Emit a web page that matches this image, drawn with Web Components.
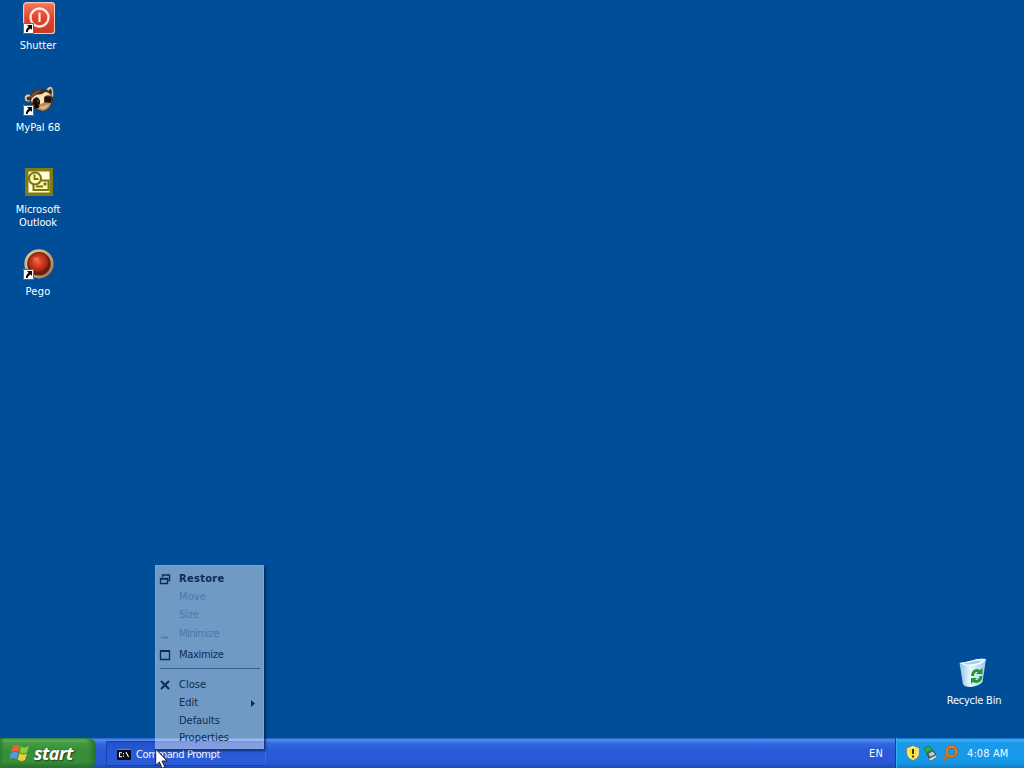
<!DOCTYPE html>
<html lang="en"><head><meta charset="utf-8"><title>Desktop</title>
<style>html,body{margin:0;width:1024px;height:768px;overflow:hidden;background:#004e98}</style></head>
<body><xp-desktop></xp-desktop>
<script>
const define=(name,html,after)=>{
  const t=document.createElement('template');t.innerHTML=html;
  customElements.define(name,class extends HTMLElement{
    constructor(){super();this.attachShadow({mode:'open'}).append(t.content.cloneNode(true));}
    connectedCallback(){if(after)after(this,this.shadowRoot);}
  });
};

// Text run whose tracking is adjusted to the advance width in the "w" attribute.
define('ui-text','<style>:host{display:block;white-space:nowrap}span{display:inline-block;white-space:nowrap}</style><span></span>',(el,r)=>{
  const s=r.querySelector('span');s.textContent=el.getAttribute('text');
  const w=+el.getAttribute('w');
  if(w){const n=s.textContent.length;s.style.letterSpacing=((w-s.getBoundingClientRect().width)/n)+'px';}
});

const arrow='<svg x="0" y="21" width="11" height="11" viewBox="0 0 11 11"><path fill="#fff" d="M0 0h11v11H0z"/><path d="M.5.5h10v10H.5z" fill="none" stroke="#222" stroke-width=".7"/><path d="M4 2h5v5L7.600 5.600C5.800 6.500 5 7.500 4.700 9L3 9C2.800 6.700 4 5 5.600 3.800z" fill="#000"/></svg>';
const icons={
shutter:`<defs><linearGradient id="g" x2="0" y2="1"><stop stop-color="#ef7b62"/><stop offset=".5" stop-color="#e0432c"/><stop offset="1" stop-color="#c93a25"/></linearGradient></defs><rect x=".6" y=".6" width="31" height="31" rx="3" fill="url(#g)" stroke="#f6c5b4" stroke-width="1.200"/><circle cx="16.500" cy="15.500" r="9" fill="none" stroke="#ffeadd" stroke-width="2.300"/><path d="M16.500 10.500v9.500" stroke="#ffeadd" stroke-width="2.200"/>${arrow}`,
mypal:`<ellipse cx="5.500" cy="14" rx="3.800" ry="3.600" fill="#e3cda6"/><ellipse cx="5.500" cy="14.500" rx="2" ry="2" fill="#4b3526"/><path d="M23 6Q26 2 28.500 3Q31 6 30 13L26 12z" fill="#dfc8a0"/><path d="M25 7l3-2.500q1.500 3 .5 6z" fill="#3a2a20"/><path d="M6 14Q8 5 17 5Q25 4 28 10Q31 16 29 21Q25 27 18 27Q10 25 8 21z" fill="#4a3020"/><path d="M7 13Q11 6 18 5.500L15 9Q11 10 8 15z" fill="#725038"/><path d="M8 16Q11 10 17 10.500Q20 10 22 8Q26 8 28 12Q24 10 21 13L21 19L17 21Q18 15 14 13Q10 13 9 19z" fill="#f7e3bb"/><path d="M10 16Q14 12 17 17Q17 20 14 22L10 20zM22 14Q26 11 28.500 15L27 19L22 18z" fill="#1b110c"/><path d="M13 22L18 20L22 18.500L28 19Q27 25 20 27L14 25z" fill="#bd895a"/><path d="M15 23Q20 23 26 20Q24 25 19 25z" fill="#e2b983"/><ellipse cx="13.700" cy="22.500" rx="2.600" ry="2" fill="#0b0908"/><circle cx="15" cy="17" r=".8" fill="#b9854f"/>${arrow}`,
outlook:`<rect x="2" y="2" width="28" height="28" fill="#7e7c13"/><path d="M5.500 5.500h21v21h-21z" fill="#fffed8"/><path d="M13.500 14.500h12v9.500h-15v-5" fill="#fff9b9" stroke="#77750f" stroke-width="2"/><circle cx="12" cy="12.500" r="6" fill="#fff9b9" stroke="#77750f" stroke-width="2"/><path d="M11.500 8.500v4.500h4M13 20.500h7" fill="none" stroke="#77750f" stroke-width="1.800"/><path d="M20.500 16.500h3v3h-3z" fill="#77750f"/>`,
pego:`<defs><radialGradient id="p" cx=".45" cy=".4"><stop stop-color="#ee6540"/><stop offset=".5" stop-color="#d0391d"/><stop offset=".85" stop-color="#a52a14"/><stop offset="1" stop-color="#6a1d12"/></radialGradient><linearGradient id="q" x2="1" y2="1"><stop stop-color="#ecd295"/><stop offset=".6" stop-color="#c79a66"/><stop offset="1" stop-color="#9b7048"/></linearGradient></defs><circle cx="16" cy="15.800" r="14.600" fill="url(#q)"/><circle cx="16" cy="15.800" r="11.800" fill="#602819"/><circle cx="16" cy="15.800" r="10.800" fill="url(#p)"/><ellipse cx="13" cy="11" rx="3" ry="2" fill="#f99b75" opacity=".4"/>${arrow}`,
bin:`<defs><linearGradient id="b"><stop stop-color="#8fc0e6"/><stop offset=".4" stop-color="#e5f8fc"/><stop offset="1" stop-color="#9fcbed"/></linearGradient></defs><path d="M1.500 6Q8 5 14 3.500Q20 1 28 2L24.500 25Q21 29 13 30Q6 30 5 27z" fill="url(#b)"/><path d="M1.500 6Q8 5 14 3.500Q20 1 28 2Q25 7 17 8.500Q8 10 1.500 6z" fill="#f0fbff"/><path d="M5 6.500Q11 6 15 4.500Q20 3 25 3.500Q21 6.500 15 7Q9 8 5 6.500z" fill="#a0cbea"/><g fill="none" stroke="#249431" stroke-width="2.800"><path d="M14.500 19c0-5 4.500-7 7.500-4M23 19c0 5-5 7-8 4"/></g><path d="M18 17h6.500v-6zM19 21h-6v6z" fill="#249431"/>`
};

define('desktop-icon',`<style>:host{display:flex;flex-direction:column;align-items:center;width:76px;height:82px;color:#fff;font:11px/13px "DejaVu Sans Condensed","DejaVu Sans",sans-serif;font-stretch:condensed}svg{display:block;flex:none}.art{width:32px;height:32px;margin:0 0 5px 1px}:host([icon=bin]) .art{margin-left:0}</style><svg class="art" width="32" height="32" viewBox="0 0 32 32"></svg><slot></slot>`,(el,r)=>{r.querySelector('svg').innerHTML=icons[el.getAttribute('icon')];});

define('menu-item',`<style>:host{display:flex;align-items:center;box-sizing:border-box;height:18px;color:#0d2c51}:host([off]){color:#4c78ab}:host([bold]){font-weight:bold}.i{width:23px;height:12px;flex:none}.i svg{display:block;margin-left:3px}.a{margin-left:auto;margin-right:8px;width:4px;height:7px;display:none}:host([sub]) .a{display:block}</style><span class="i"><svg width="12" height="12" viewBox="0 0 12 12" fill="none" stroke="currentColor"></svg></span><slot></slot><svg class="a" viewBox="0 0 4 7"><path d="M0 0l4 3.500-4 3.500z" fill="currentColor"/></svg>`,(el,r)=>{
 r.querySelector('svg').innerHTML=({
 restore:'<path d="M3.500 4V2h7v5.500H9M3 2h8" stroke-width="1.400"/><path d="M1.500 5.500h7v5h-7zM1 6h8" stroke-width="1.300"/>',
 min:'<path d="M2 9.500h7" stroke-width="1.500"/>',
 max:'<path d="M1.500 2h9v8.500h-9z" stroke-width="1.300"/><path d="M1 2h10" stroke-width="2"/>',
 close:'<path d="M2 2l8 8M10 2l-8 8" stroke-width="2"/>'})[el.getAttribute('icon')]||'';
});

define('context-menu',`<style>:host{display:block;position:absolute;left:155px;top:565px;width:109px;height:184px;box-sizing:border-box;background:rgba(255,255,255,.43);border:1px solid rgba(150,180,208,.45);box-shadow:2px 2px 2px rgba(0,20,60,.55);font:11px/14px "DejaVu Sans Condensed","DejaVu Sans",sans-serif;font-stretch:condensed;padding-top:4px}
hr{height:1px;border:0;background:#345f91;margin:2px 3px 7px 4px}</style>
<menu-item bold icon="restore"><ui-text text="Restore" w="45.500"></ui-text></menu-item>
<menu-item off><ui-text text="Move" w="27"></ui-text></menu-item>
<menu-item off><ui-text text="Size" w="20"></ui-text></menu-item>
<menu-item off icon="min" style="height:20px"><ui-text text="Minimize" w="40"></ui-text></menu-item>
<menu-item icon="max" style="height:22px"><ui-text text="Maximize" w="44.500"></ui-text></menu-item><hr>
<menu-item icon="close"><ui-text text="Close" w="27"></ui-text></menu-item>
<menu-item sub><ui-text text="Edit" w="19"></ui-text></menu-item>
<menu-item style="height:17px"><ui-text text="Defaults" w="41"></ui-text></menu-item>
<menu-item style="height:17px"><ui-text text="Properties" w="50"></ui-text></menu-item>`);

define('start-button',`<style>:host{display:flex;align-items:center;box-sizing:border-box;width:96px;height:30px;padding-left:10px;gap:4px;border-radius:0 8px 8px 0;background:linear-gradient(#529f53 0,#70ba6d 2px,#439d43 5px,#388e38 12px,#388f38 24px,#286f2b);box-shadow:inset -4px 0 5px #287132,inset 2px 0 3px #2a8138;color:#fff;font:italic bold 18px/22px "Open Sans","Liberation Sans",sans-serif;text-shadow:1px 1px 2px #173e1a}ui-text{margin-top:-1px}svg{flex:none;margin-top:-1px}</style>
<svg width="20" height="20" viewBox="0 0 20 20"><path d="M3 3q4-2 7 0L8.500 9Q5 7 1 9z" fill="#e66435"/><path d="M11 3.500q4 2 8-.5l-2 6.500q-4 2-7.500 0z" fill="#8acb40"/><path d="M1 10q4-2 7.500 0L6.500 16Q3 14-.5 16z" fill="#5792ee"/><path d="M9.500 10.500q4 2 7.500 0L15 17q-4 2-7.500-.5z" fill="#f8cb36"/></svg><ui-text text="start" w="39"></ui-text>`);

define('task-button',`<style>:host{display:flex;align-items:center;box-sizing:border-box;width:160px;height:25px;margin:3px 0 0 10px;padding-left:10px;gap:5px;border:1px solid #1841ab;border-right-color:#3c6ce3;border-radius:2px;background:linear-gradient(#2351c5,#2859d6 40%,#2a5cd8)}svg{flex:none}ui-text{margin-top:2px}svg{margin-top:1px}</style><svg width="14" height="11" viewBox="0 0 14 11"><rect width="14" height="11" rx="1" fill="#080c12"/><path d="M0 .5h14" stroke="#6482ad"/><g fill="none" stroke="#fff" stroke-width="1.100"><path d="M5 3.700H2.500v4H5M9 3l2.500 5"/><path d="M6.500 4v1.200M6.500 6.500v1.200"/></g></svg><ui-text text="Command Prompt" w="84"></ui-text>`);

define('system-tray',`<style>:host{display:flex;align-items:center;box-sizing:border-box;width:129px;height:30px;padding-left:9px;border-left:1px solid #123fa0;background:linear-gradient(#1768c9 0,#3ab2f4 2px,#1c98ea 5px,#129be9 22px,#1590df 26px,#127ac5);box-shadow:inset 1px 0 #38aef2}svg{flex:none;margin-right:2px}ui-text{margin-left:5px;margin-top:1px}</style>
<svg width="16" height="16" viewBox="0 0 16 16"><path d="M8 .5L14.300 3v5q0 5-6.300 7.500Q1.700 13 1.700 8V3z" fill="#f2f0d5" stroke="#73816c"/><path d="M8 2l4.800 2v4q0 4-4.800 6Q3.200 12 3.200 8V4z" fill="#ffe238"/><path d="M8 4v5M8 10.500v2" stroke="#26220f" stroke-width="1.800"/></svg>
<svg width="17" height="17" viewBox="0 0 17 17"><path d="M4 8l6-3 3 5-7 3z" fill="#66727a" stroke="#334752"/><path d="M6 8.500l4-2 2 3-5 2z" fill="#b5d2df"/><path d="M5 14l8-4 1 2-6 4z" fill="#d5dde0" stroke="#43525a" stroke-width=".6"/><path d="M1 3l6-2v1.500l2 1.500-2 3-2-.5-1 3-1.500-3z" fill="#2aad48" stroke="#147438" stroke-width=".7"/></svg>
<svg width="18" height="17" viewBox="0 0 18 17"><circle cx="9.500" cy="6.700" r="4.900" fill="none" stroke="#a84c0b" stroke-width="3.200"/><circle cx="9.500" cy="6.700" r="4.900" fill="none" stroke="#ee8227" stroke-width="2"/><path d="M6 10.500L1.800 15" stroke="#d4670f" stroke-width="3"/></svg><ui-text text="4:08 AM" w="41.500"></ui-text>`);

define('task-bar',`<style>:host{display:flex;height:30px;color:#f4f8ff;background:linear-gradient(#235dc6 0,#568fee 2px,#326be3 5px,#285bd7 12px,#285ad8 24px,#1e49b8);font:11px/14px "DejaVu Sans Condensed","DejaVu Sans",sans-serif;font-stretch:condensed}.lang{margin-left:auto;display:flex;align-items:center;padding:1px 12px 0 0}</style>
<start-button></start-button><task-button></task-button><span class="lang"><ui-text text="EN" w="14"></ui-text></span><system-tray></system-tray>`);

define('xp-desktop',`<style>:host{display:flex;flex-direction:column;position:relative;width:1024px;height:768px;background:#004e98;overflow:hidden}main{flex:1;display:flex;justify-content:space-between;padding-top:2px;box-sizing:border-box}.right{display:flex;align-items:flex-end;padding-right:12px}.right desktop-icon{height:81px}.cursor{position:absolute;left:155px;top:748px}</style>
<main><div>
<desktop-icon icon="shutter"><ui-text text="Shutter" w="36.500"></ui-text></desktop-icon>
<desktop-icon icon="mypal"><ui-text text="MyPal 68" w="44.500"></ui-text></desktop-icon>
<desktop-icon icon="outlook"><ui-text text="Microsoft" w="44.500"></ui-text><ui-text text="Outlook" w="38"></ui-text></desktop-icon>
<desktop-icon icon="pego"><ui-text text="Pego" w="25"></ui-text></desktop-icon>
</div><div class="right"><desktop-icon icon="bin"><ui-text text="Recycle Bin" w="54.500"></ui-text></desktop-icon></div></main>
<task-bar></task-bar><context-menu></context-menu>
<svg class="cursor" width="13" height="21" viewBox="0 0 13 21"><path d="M.7 1v16.500l3.700-3.500 2.800 6.300 2.700-1.200L7 13h5z" fill="#fff" stroke="#111" stroke-width=".9"/></svg>`);
</script></body></html>
